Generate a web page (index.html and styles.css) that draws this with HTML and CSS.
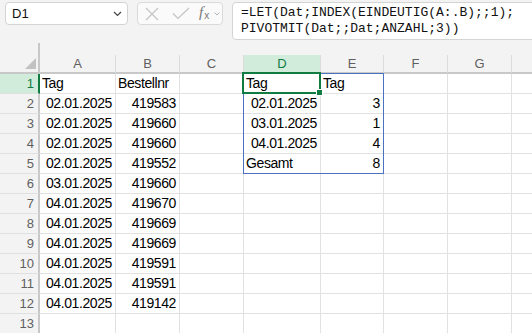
FILE: index.html
```html
<!DOCTYPE html>
<html lang="de">
<head>
<meta charset="utf-8">
<title>Excel</title>
<link rel="stylesheet" href="styles.css">
</head>
<body>
<div class="app">
  <div class="toolbar">
    <div class="namebox">
      <span class="name">D1</span>
      <svg class="chev" width="9" height="6" viewBox="0 0 9 6"><path d="M1 1 L4.5 4.5 L8 1" fill="none" stroke="#444" stroke-width="1.2"/></svg>
    </div>
    <div class="fnbox">
      <svg class="ico" width="14" height="14" viewBox="0 0 14 14"><path d="M1 1 L13 13 M13 1 L1 13" stroke="#c4c4c4" stroke-width="1.2" fill="none"/></svg>
      <svg class="ico check" width="18" height="13" viewBox="0 0 18 13"><path d="M1 6.5 L6 11.5 L17 1" stroke="#c4c4c4" stroke-width="1.2" fill="none"/></svg>
      <span class="fx"><i>f</i><sub>x</sub></span>
      <svg class="chev small" width="6" height="4" viewBox="0 0 6 4"><path d="M0.5 0.5 L3 3 L5.5 0.5" fill="none" stroke="#b5b5b5" stroke-width="1"/></svg>
    </div>
    <div class="formula">=LET(Dat;INDEX(EINDEUTIG(A:.B);;1);
PIVOTMIT(Dat;;Dat;ANZAHL;3))</div>
  </div>
  <div class="sheet">
    <div class="corner"></div>
    <div class="ch">A</div><div class="ch">B</div><div class="ch">C</div><div class="ch sel-h">D</div><div class="ch">E</div><div class="ch">F</div><div class="ch">G</div><div class="ch"></div>

    <div class="rh sel-r">1</div>
    <div class="c">Tag</div><div class="c">Bestellnr</div><div class="c"></div>
    <div class="c anchor">Tag<div class="spill"></div><div class="selbox"><div class="handle"></div></div></div>
    <div class="c">Tag</div><div class="c"></div><div class="c"></div><div class="c"></div>

    <div class="rh">2</div>
    <div class="c n">02.01.2025</div><div class="c n">419583</div><div class="c"></div><div class="c n">02.01.2025</div><div class="c n">3</div><div class="c"></div><div class="c"></div><div class="c"></div>

    <div class="rh">3</div>
    <div class="c n">02.01.2025</div><div class="c n">419660</div><div class="c"></div><div class="c n">03.01.2025</div><div class="c n">1</div><div class="c"></div><div class="c"></div><div class="c"></div>

    <div class="rh">4</div>
    <div class="c n">02.01.2025</div><div class="c n">419660</div><div class="c"></div><div class="c n">04.01.2025</div><div class="c n">4</div><div class="c"></div><div class="c"></div><div class="c"></div>

    <div class="rh">5</div>
    <div class="c n">02.01.2025</div><div class="c n">419552</div><div class="c"></div><div class="c">Gesamt</div><div class="c n">8</div><div class="c"></div><div class="c"></div><div class="c"></div>

    <div class="rh">6</div>
    <div class="c n">03.01.2025</div><div class="c n">419660</div><div class="c"></div><div class="c"></div><div class="c"></div><div class="c"></div><div class="c"></div><div class="c"></div>

    <div class="rh">7</div>
    <div class="c n">04.01.2025</div><div class="c n">419670</div><div class="c"></div><div class="c"></div><div class="c"></div><div class="c"></div><div class="c"></div><div class="c"></div>

    <div class="rh">8</div>
    <div class="c n">04.01.2025</div><div class="c n">419669</div><div class="c"></div><div class="c"></div><div class="c"></div><div class="c"></div><div class="c"></div><div class="c"></div>

    <div class="rh">9</div>
    <div class="c n">04.01.2025</div><div class="c n">419669</div><div class="c"></div><div class="c"></div><div class="c"></div><div class="c"></div><div class="c"></div><div class="c"></div>

    <div class="rh">10</div>
    <div class="c n">04.01.2025</div><div class="c n">419591</div><div class="c"></div><div class="c"></div><div class="c"></div><div class="c"></div><div class="c"></div><div class="c"></div>

    <div class="rh">11</div>
    <div class="c n">04.01.2025</div><div class="c n">419591</div><div class="c"></div><div class="c"></div><div class="c"></div><div class="c"></div><div class="c"></div><div class="c"></div>

    <div class="rh">12</div>
    <div class="c n">04.01.2025</div><div class="c n">419142</div><div class="c"></div><div class="c"></div><div class="c"></div><div class="c"></div><div class="c"></div><div class="c"></div>

    <div class="rh">13</div>
    <div class="c"></div><div class="c"></div><div class="c"></div><div class="c"></div><div class="c"></div><div class="c"></div><div class="c"></div><div class="c"></div>
  </div>
</div>
</body>
</html>
```

FILE: styles.css
```css
html, body {
  margin: 0;
  padding: 0;
}
body {
  width: 532px;
  height: 333px;
  overflow: hidden;
  background: #f3f3f3;
  font-family: "Liberation Sans", Arial, sans-serif;
}
.app {
  width: 532px;
  height: 333px;
  overflow: hidden;
  background: #f3f3f3;
}
.toolbar {
  display: flex;
  align-items: flex-start;
  height: 43px;
  box-sizing: border-box;
  padding: 2px 0 0 5px;
}
.toolbar > * {
  flex: none;
}
.namebox {
  box-sizing: border-box;
  width: 123px;
  height: 23px;
  background: #fff;
  border: 1px solid #d4d4d4;
  border-radius: 4px;
  display: flex;
  align-items: center;
  justify-content: space-between;
  padding: 0 5px 0 6px;
}
.name {
  font-size: 13px;
  color: #111;
  letter-spacing: 0.2px;
}
.fnbox {
  box-sizing: border-box;
  margin-left: 9px;
  width: 86px;
  height: 23px;
  background: #fafafa;
  border: 1px solid #dadada;
  border-radius: 4px;
  display: flex;
  align-items: center;
  padding-left: 7px;
}
.ico.check {
  margin-left: 13px;
}
.fx {
  margin-left: 9px;
  font-family: "Liberation Serif", serif;
  color: #777;
  font-size: 15px;
  line-height: 15px;
}
.fx sub {
  font-size: 10px;
  font-family: "Liberation Sans", sans-serif;
  font-style: normal;
  vertical-align: -2px;
  margin-left: 1px;
}
.chev.small {
  margin-left: 5px;
}
.formula {
  box-sizing: border-box;
  margin-left: 9px;
  width: 360px;
  height: 38px;
  background: #fff;
  border: 1px solid #d4d4d4;
  border-radius: 4px;
  padding: 2px 0 0 8px;
  font-family: "Liberation Mono", "DejaVu Sans Mono", monospace;
  font-size: 13px;
  line-height: 16px;
  white-space: pre;
  color: #111;
}
.sheet {
  display: grid;
  grid-template-columns: 40px 76px 64px 64px 77px 63px 64px 64px 64px;
  grid-template-rows: 31px repeat(13, 20px);
}
.corner {
  position: relative;
  box-sizing: border-box;
  background: #f3f3f3;
  border-right: 2px solid #c8c8c8;
  border-bottom: 2px solid #c8c8c8;
}
.corner::after {
  content: "";
  position: absolute;
  right: 2px;
  bottom: 3px;
  width: 11px;
  height: 11px;
  background: #c2c2c2;
  clip-path: polygon(100% 0, 100% 100%, 0 100%);
}
.ch {
  box-sizing: border-box;
  margin-top: 12px;
  background: #f3f3f3;
  border-right: 1px solid #dcdcdc;
  border-bottom: 2px solid #c8c8c8;
  text-align: center;
  font-size: 13px;
  line-height: 17px;
  color: #5f5f5f;
}
.rh {
  box-sizing: border-box;
  background: #f3f3f3;
  border-right: 2px solid #c8c8c8;
  border-bottom: 1px solid #e0e0e0;
  text-align: right;
  padding-right: 4px;
  font-size: 13px;
  line-height: 19px;
  color: #5f5f5f;
}
.sel-h {
  background: #d2ecdc;
  border-bottom-color: #107c41;
  color: #107c41;
}
.sel-r {
  background: #d2ecdc;
  border-right-color: #107c41;
  color: #107c41;
}
.c {
  box-sizing: border-box;
  background: #fff;
  border-right: 1px solid #e1e1e1;
  border-bottom: 1px solid #e1e1e1;
  padding: 0 2px;
  font-size: 14px;
  letter-spacing: -0.4px;
  line-height: 19px;
  color: #000;
  white-space: nowrap;
}
.n {
  text-align: right;
  padding-right: 3px;
}
.anchor {
  position: relative;
}
.spill {
  position: absolute;
  left: -1px;
  top: -1px;
  width: 141px;
  height: 101px;
  box-sizing: border-box;
  border: 1px solid #4a72c0;
  z-index: 1;
}
.selbox {
  position: absolute;
  left: -2px;
  top: -2px;
  right: -1px;
  bottom: -1px;
  border: 2px solid #107c41;
  z-index: 2;
}
.handle {
  position: absolute;
  right: -4px;
  bottom: -4px;
  width: 5px;
  height: 5px;
  background: #107c41;
  border: 1px solid #fff;
}
```
